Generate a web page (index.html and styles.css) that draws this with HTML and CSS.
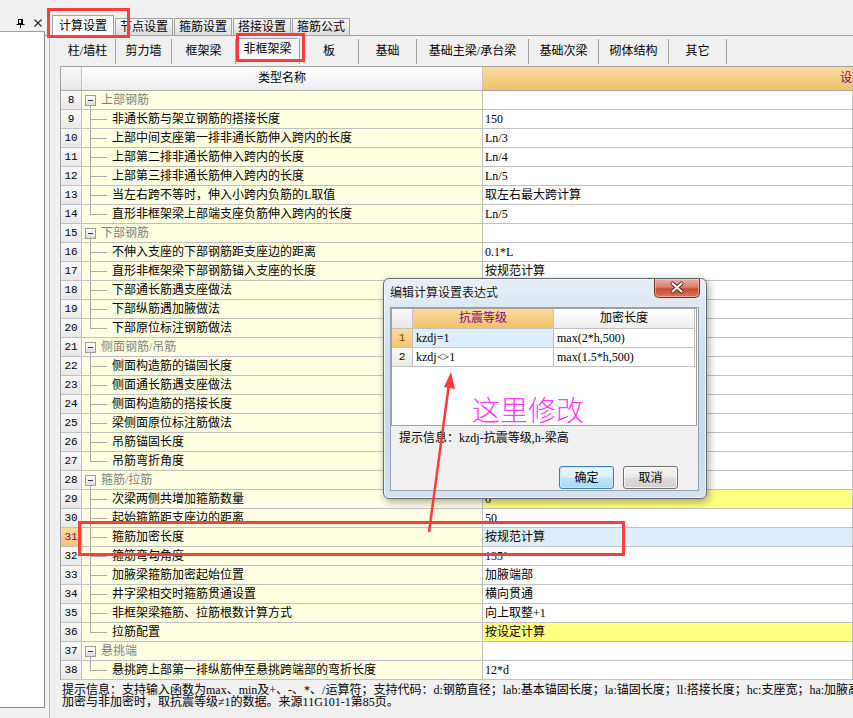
FILE: index.html
```html
<!DOCTYPE html>
<html lang="zh-CN">
<head>
<meta charset="utf-8">
<title>计算设置</title>
<link rel="stylesheet" href="styles.css">
</head>
<body>
<div class="app">
  <aside class="side">
    <div class="side-head">
      <svg class="pin" width="9" height="9" viewBox="0 0 9 9"><rect x="2.5" y="0.5" width="4" height="4" fill="none" stroke="#000"/><rect x="5" y="0.5" width="1.5" height="4" fill="#000"/><path d="M0.5 5.5H8.5M4.5 5.5V9" stroke="#000" fill="none"/></svg>
      <svg class="xicon" width="8" height="8" viewBox="0 0 8 8"><path d="M0.5 0.5L7.5 7.5M7.5 0.5L0.5 7.5" stroke="#222" stroke-width="1.1" fill="none"/></svg>
    </div>
    <div class="side-body"></div>
  </aside>
  <main class="main">
    <div class="tabs">
      <div class="tab active">计算设置</div>
      <div class="tab">节点设置</div>
      <div class="tab">箍筋设置</div>
      <div class="tab">搭接设置</div>
      <div class="tab">箍筋公式</div>
    </div>
    <div class="panel">
      <div class="subtabs">
        <div class="st w56">柱/墙柱</div>
        <div class="st w56">剪力墙</div>
        <div class="st w64">框架梁</div>
        <div class="st w64 sel"><span class="pressed">非框架梁</span></div>
        <div class="st w59">板</div>
        <div class="st w58">基础</div>
        <div class="st w112">基础主梁/承台梁</div>
        <div class="st w70">基础次梁</div>
        <div class="st w70">砌体结构</div>
        <div class="st w58">其它</div>
      </div>
      <div class="grid">
        <div class="n hd"></div><div class="hn">类型名称</div><div class="hv">设置值</div>

        <div class="n">8</div><div class="nm g"><i class="box"></i>上部钢筋</div><div class="v"></div>
        <div class="n">9</div><div class="nm c">非通长筋与架立钢筋的搭接长度</div><div class="v">150</div>
        <div class="n">10</div><div class="nm c">上部中间支座第一排非通长筋伸入跨内的长度</div><div class="v">Ln/3</div>
        <div class="n">11</div><div class="nm c">上部第二排非通长筋伸入跨内的长度</div><div class="v">Ln/4</div>
        <div class="n">12</div><div class="nm c">上部第三排非通长筋伸入跨内的长度</div><div class="v">Ln/5</div>
        <div class="n">13</div><div class="nm c">当左右跨不等时，伸入小跨内负筋的L取值</div><div class="v">取左右最大跨计算</div>
        <div class="n">14</div><div class="nm c last">直形非框架梁上部端支座负筋伸入跨内的长度</div><div class="v">Ln/5</div>

        <div class="n">15</div><div class="nm g"><i class="box"></i>下部钢筋</div><div class="v"></div>
        <div class="n">16</div><div class="nm c">不伸入支座的下部钢筋距支座边的距离</div><div class="v">0.1*L</div>
        <div class="n">17</div><div class="nm c">直形非框架梁下部钢筋锚入支座的长度</div><div class="v">按规范计算</div>
        <div class="n">18</div><div class="nm c">下部通长筋遇支座做法</div><div class="v">遇支座连续通过</div>
        <div class="n">19</div><div class="nm c">下部纵筋遇加腋做法</div><div class="v">锚入加腋</div>
        <div class="n">20</div><div class="nm c last">下部原位标注钢筋做法</div><div class="v">遇支座断开</div>

        <div class="n">21</div><div class="nm g"><i class="box"></i>侧面钢筋/吊筋</div><div class="v"></div>
        <div class="n">22</div><div class="nm c">侧面构造筋的锚固长度</div><div class="v">15*d</div>
        <div class="n">23</div><div class="nm c">侧面通长筋遇支座做法</div><div class="v">遇支座连续通过</div>
        <div class="n">24</div><div class="nm c">侧面构造筋的搭接长度</div><div class="v">15*d</div>
        <div class="n">25</div><div class="nm c">梁侧面原位标注筋做法</div><div class="v">遇支座断开</div>
        <div class="n">26</div><div class="nm c">吊筋锚固长度</div><div class="v">20*d</div>
        <div class="n">27</div><div class="nm c last">吊筋弯折角度</div><div class="v">按规范计算</div>

        <div class="n">28</div><div class="nm g"><i class="box"></i>箍筋/拉筋</div><div class="v"></div>
        <div class="n">29</div><div class="nm c">次梁两侧共增加箍筋数量</div><div class="v y">0</div>
        <div class="n">30</div><div class="nm c">起始箍筋距支座边的距离</div><div class="v">50</div>
        <div class="n sel">31</div><div class="nm c">箍筋加密长度</div><div class="v b">按规范计算</div>
        <div class="n">32</div><div class="nm c">箍筋弯勾角度</div><div class="v">135°</div>
        <div class="n">33</div><div class="nm c">加腋梁箍筋加密起始位置</div><div class="v">加腋端部</div>
        <div class="n">34</div><div class="nm c">井字梁相交时箍筋贯通设置</div><div class="v">横向贯通</div>
        <div class="n">35</div><div class="nm c">非框架梁箍筋、拉筋根数计算方式</div><div class="v">向上取整+1</div>
        <div class="n">36</div><div class="nm c last">拉筋配置</div><div class="v y">按设定计算</div>

        <div class="n">37</div><div class="nm g"><i class="box"></i>悬挑端</div><div class="v"></div>
        <div class="n">38</div><div class="nm c last">悬挑跨上部第一排纵筋伸至悬挑跨端部的弯折长度</div><div class="v">12*d</div>
      </div>
      <div class="hint">
        <div>提示信息：支持输入函数为max、min及+、-、*、/运算符；支持代码：d:钢筋直径；lab:基本锚固长度；la:锚固长度；ll:搭接长度；hc:支座宽；ha:加腋高度</div>
        <div>加密与非加密时，取抗震等级≠1的数据。来源11G101-1第85页。</div>
      </div>
    </div>
  </main>
</div>

<div class="dlg">
  <div class="dlg-title">编辑计算设置表达式</div>
  <div class="dlg-close">
    <svg width="44" height="17" viewBox="0 0 44 17"><path d="M17.5 4.5L26.5 12.5M26.5 4.5L17.5 12.5" stroke="#5b2219" stroke-width="4" stroke-linecap="round" fill="none"/><path d="M17.5 4.5L26.5 12.5M26.5 4.5L17.5 12.5" stroke="#fff" stroke-width="2.2" stroke-linecap="round" fill="none"/></svg>
  </div>
  <div class="client">
    <div class="tbox">
      <div class="dgrid">
        <div class="dn hd"></div><div class="dh1">抗震等级</div><div class="dh2">加密长度</div>
        <div class="dn sel">1</div><div class="dc b">kzdj=1</div><div class="dc">max(2*h,500)</div>
        <div class="dn">2</div><div class="dc">kzdj<span class="ne">&lt;&gt;</span>1</div><div class="dc">max(1.5*h,500)</div>
      </div>
    </div>
    <div class="dhint">提示信息：kzdj-抗震等级,h-梁高</div>
    <div class="btns">
      <div class="btn ok">确定</div>
      <div class="btn">取消</div>
    </div>
  </div>
</div>

<div class="note">这里修改</div>
<div class="mark m-tab"></div>
<div class="mark m-sub"></div>
<div class="mark m-row"></div>
<svg class="arrow" width="853" height="718" viewBox="0 0 853 718">
  <path d="M429 532L449 384" stroke="#ff3b3b" stroke-width="2.5" fill="none"/>
  <polygon points="451,372 455,389 444,387" fill="#ff3b3b"/>
</svg>
</body>
</html>
```
FILE: styles.css
```css
* { box-sizing: border-box; }
html, body { margin: 0; padding: 0; }
body {
  width: 853px;
  height: 718px;
  overflow: hidden;
  position: relative;
  background: #f0f0f0;
  color: #000;
  font-family: "Liberation Serif", "Noto Sans CJK SC", serif;
  font-size: 12px;
  line-height: 14px;
}

.app { display: flex; height: 718px; }

/* left docked panel */
.side { width: 45px; flex: none; display: flex; flex-direction: column; }
.side-head {
  height: 32px;
  border-bottom: 1px solid #a0a0a0;
  display: flex;
  align-items: flex-start;
  padding: 19px 0 0 16px;
  gap: 9px;
}
.side-body {
  height: 676px;
  background: #fff;
  border-right: 1px solid #828790;
  border-bottom: 1px solid #828790;
}

.main { flex: 1; min-width: 0; display: flex; flex-direction: column; overflow: hidden; }

/* top tabs */
.tabs {
  height: 36px;
  flex: none;
  display: flex;
  align-items: flex-end;
  gap: 1px;
  padding-left: 7px;
  border-bottom: 1px solid #a0a0a0;
}
.tab {
  height: 17px;
  padding: 0 4px;
  border: 1px solid #a0a0a0;
  border-bottom: none;
  background: linear-gradient(#f7f7f7, #dedede);
  line-height: 16px;
  white-space: nowrap;
}
.tab.active {
  height: 21px;
  margin-bottom: -1px;
  padding: 0 6px;
  background: #fff;
  line-height: 20px;
  position: relative;
}

.panel {
  flex: 1;
  margin-left: 4px;
  border-left: 1px solid #b9b9b9;
  padding-left: 10px;
  display: flex;
  flex-direction: column;
  min-width: 0;
}

/* sub tabs */
.subtabs { height: 30px; flex: none; display: flex; align-items: center; }
.st {
  height: 25px;
  border-right: 1px solid #a0a0a0;
  display: flex;
  align-items: center;
  justify-content: center;
  white-space: nowrap;
  flex: none;
}
.w56 { width: 56px; }
.w58 { width: 58px; }
.w59 { width: 59px; }
.w64 { width: 64px; }
.w70 { width: 70px; }
.w112 { width: 112px; }
.st.sel { align-items: flex-start; }
.pressed {
  margin-top: -1px;
  width: 60px;
  height: 23px;
  display: flex;
  align-items: center;
  justify-content: center;
  background: #f9f9f9;
  border: 1px solid #fff;
  border-top-color: #a0a0a0;
  border-left-color: #a0a0a0;
}

/* main grid */
.grid {
  flex: none;
  display: grid;
  grid-template-columns: 21px 401px 1fr;
  grid-template-rows: 24px;
  grid-auto-rows: 19px;
  border-top: 1px solid #a0a0a0;
  border-left: 1px solid #a0a0a0;
}
.grid > div {
  border-right: 1px solid #c0c0c0;
  border-bottom: 1px solid #c0c0c0;
  white-space: nowrap;
  overflow: hidden;
  line-height: 18px;
}
.n {
  background: linear-gradient(#f9f9f9, #e8e8e8);
  text-align: center;
  font-family: "Liberation Mono", "Noto Sans CJK SC", monospace;
  font-size: 11px;
}
.n.sel { background: linear-gradient(#fbdc9e, #f4c66f); color: #800080; }
.grid > .hd, .grid > .hn, .grid > .hv { border-bottom-color: #a8a8a8; line-height: 23px; }
.hn {
  background: linear-gradient(#ffffff, #ececec);
  text-align: center;
}
.hv {
  background: linear-gradient(#f9dca2, #f1c265);
  color: #800080;
  padding-left: 357px;
}
.nm {
  background: #ffffe1;
  position: relative;
  padding-left: 30px;
}
.nm.g { padding-left: 19px; color: #808080; }
.nm .box {
  position: absolute;
  left: 3px;
  top: 4px;
  width: 11px;
  height: 11px;
  border: 1px solid #9c9c9c;
  background: linear-gradient(#ffffff, #dcdcdc);
}
.nm .box::after {
  content: "";
  position: absolute;
  left: 2px;
  top: 4px;
  width: 5px;
  height: 1px;
  background: #333;
}
.nm.g::before {
  content: "";
  position: absolute;
  left: 8px;
  top: 15px;
  bottom: -1px;
  width: 1px;
  background: #a8a8a8;
}
.nm.c::before {
  content: "";
  position: absolute;
  left: 8px;
  top: 0;
  bottom: -1px;
  width: 1px;
  background: #a8a8a8;
}
.nm.c.last::before { bottom: 9px; }
.nm.c::after {
  content: "";
  position: absolute;
  left: 8px;
  top: 9px;
  width: 17px;
  height: 1px;
  background: #a8a8a8;
}
.v { background: #fff; padding-left: 2px; }
.v.y { background: #ffff80; }
.v.b { background: #ddeeff; }

.hint {
  padding: 4px 0 0 2px;
  line-height: 12px;
  white-space: nowrap;
  overflow: hidden;
}

/* dialog */
.dlg {
  position: absolute;
  left: 383px;
  top: 278px;
  width: 324px;
  height: 221px;
  border: 1px solid #5d6976;
  border-radius: 6px;
  background: linear-gradient(#e6eef7, #d2e0ef 30%, #c9daed 70%, #d3e1f0);
  box-shadow: inset 0 0 0 1px rgba(255,255,255,.65), 2px 3px 9px rgba(0,0,0,.35);
  padding: 0 7px 7px 6px;
  display: flex;
  flex-direction: column;
  z-index: 5;
}
.dlg-title {
  height: 28px;
  line-height: 28px;
  flex: none;
  color: #111;
  text-shadow: 0 0 6px #fff, 0 0 3px #fff;
}
.dlg-close {
  position: absolute;
  right: 6px;
  top: 0;
  width: 46px;
  height: 19px;
  border: 1px solid #6d2e24;
  border-top: none;
  border-radius: 0 0 5px 5px;
  background: linear-gradient(#eab1a5 0%, #d8806c 45%, #c74a32 55%, #d9785a 100%);
  box-shadow: inset 0 0 0 1px rgba(255,220,210,.5);
}
.dlg-close svg { display: block; }
.client {
  flex: 1;
  background: #f0f0f0;
  border: 1px solid #8ea1b6;
  display: flex;
  flex-direction: column;
}
.tbox {
  height: 118px;
  flex: none;
  background: #fff;
  border: 1px solid #a0a0a0;
  margin-right: 1px;
}
.dgrid {
  display: grid;
  grid-template-columns: 21px 141px 141px;
  grid-template-rows: 20px 19px 19px;
}
.dgrid > div {
  border-right: 1px solid #c0c0c0;
  border-bottom: 1px solid #c0c0c0;
  line-height: 18px;
  white-space: nowrap;
  overflow: hidden;
}
.dn {
  background: linear-gradient(#f9f9f9, #e8e8e8);
  text-align: center;
  font-family: "Liberation Mono", "Noto Sans CJK SC", monospace;
  font-size: 11px;
}
.dn.sel { background: linear-gradient(#fbdc9e, #f4c66f); color: #7a3a10; }
.dgrid > .hd, .dgrid > .dh1, .dgrid > .dh2 { line-height: 19px; text-align: center; }
.dh1 { background: linear-gradient(#f9dca2, #f1c265); color: #800080; }
.dh2 { background: linear-gradient(#ffffff, #ececec); }
.dc { padding-left: 3px; font-size: 12px; }
.dc.b { background: #ddeeff; }
.ne { letter-spacing: -1px; margin-right: 1px; }
.dhint { margin-top: 5px; padding-left: 8px; line-height: 14px; }
.btns {
  margin-top: auto;
  display: flex;
  justify-content: flex-end;
  gap: 9px;
  padding-right: 20px;
  margin-bottom: 1px;
}
.btn {
  width: 55px;
  height: 23px;
  border: 1px solid #707070;
  border-radius: 3px;
  background: linear-gradient(#f2f2f2 0%, #ebebeb 48%, #dddddd 52%, #cfcfcf 100%);
  box-shadow: inset 0 0 0 1px rgba(255,255,255,.7);
  display: flex;
  align-items: center;
  justify-content: center;
}
.btn.ok {
  border-color: #3c7fb1;
  background: linear-gradient(#eaf6fd 0%, #d9f0fc 48%, #bee6fd 52%, #a7d9f5 100%);
  box-shadow: inset 0 0 0 1px #c6e8fb;
}

/* annotations */
.note {
  position: absolute;
  left: 472px;
  top: 393px;
  font-family: "Noto Sans CJK SC", sans-serif;
  font-size: 28px;
  line-height: 32px;
  font-weight: 300;
  color: #ff3cff;
  z-index: 6;
}
.mark {
  position: absolute;
  border: 3px solid #ff3c3c;
  z-index: 7;
}
.m-tab { left: 47px; top: 8px; width: 83px; height: 30px; }
.m-sub { left: 236px; top: 33px; width: 69px; height: 29px; }
.m-row { left: 78px; top: 521px; width: 547px; height: 35px; }
.arrow { position: absolute; left: 0; top: 0; z-index: 8; pointer-events: none; }
```
